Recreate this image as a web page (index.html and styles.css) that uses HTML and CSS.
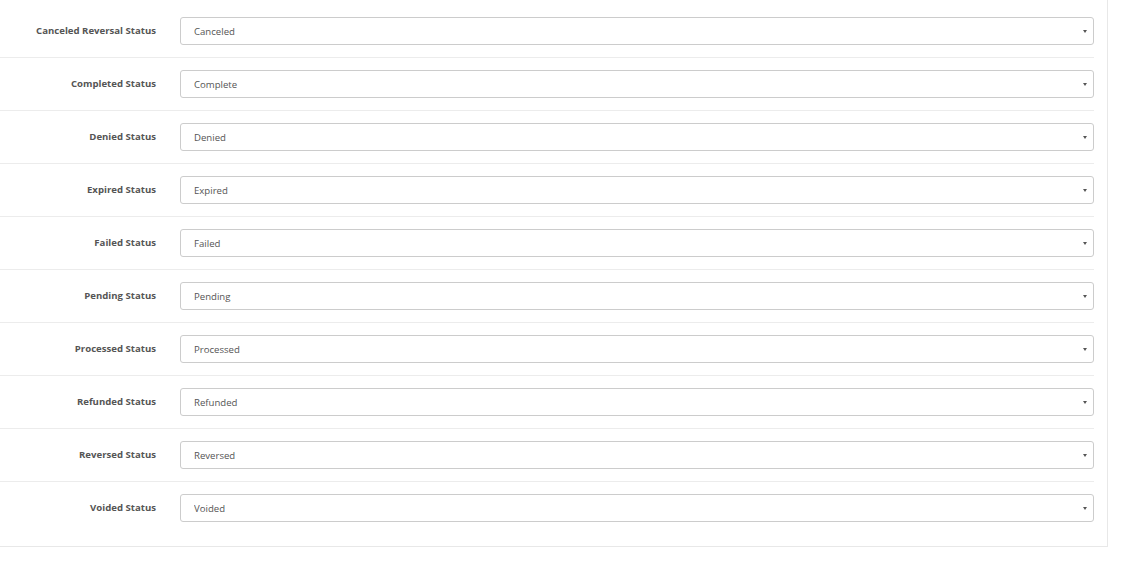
FILE: index.html
```html
<!DOCTYPE html>
<html>
<head>
<meta charset="utf-8">
<link rel="stylesheet" href="styles.css">
</head>
<body>
<div class="panel">
  <div class="row"><label class="lbl">Canceled Reversal Status</label><div class="sel"><select><option>Canceled</option></select><span class="caret"></span></div></div>
  <div class="row"><label class="lbl">Completed Status</label><div class="sel"><select><option>Complete</option></select><span class="caret"></span></div></div>
  <div class="row"><label class="lbl">Denied Status</label><div class="sel"><select><option>Denied</option></select><span class="caret"></span></div></div>
  <div class="row"><label class="lbl">Expired Status</label><div class="sel"><select><option>Expired</option></select><span class="caret"></span></div></div>
  <div class="row"><label class="lbl">Failed Status</label><div class="sel"><select><option>Failed</option></select><span class="caret"></span></div></div>
  <div class="row"><label class="lbl">Pending Status</label><div class="sel"><select><option>Pending</option></select><span class="caret"></span></div></div>
  <div class="row"><label class="lbl">Processed Status</label><div class="sel"><select><option>Processed</option></select><span class="caret"></span></div></div>
  <div class="row"><label class="lbl">Refunded Status</label><div class="sel"><select><option>Refunded</option></select><span class="caret"></span></div></div>
  <div class="row"><label class="lbl">Reversed Status</label><div class="sel"><select><option>Reversed</option></select><span class="caret"></span></div></div>
  <div class="row last"><label class="lbl">Voided Status</label><div class="sel"><select><option>Voided</option></select><span class="caret"></span></div></div>
</div>
</body>
</html>
```
FILE: styles.css
```css
html, body { margin: 0; padding: 0; background: #fff; }
body { font-family: "Open Sans", "Liberation Sans", sans-serif; }
.panel {
  width: 1094px;
  padding-right: 13px;
  border-right: 1px solid #e8e8e8;
  border-bottom: 1px solid #e8e8e8;
  padding-top: 5px;
}
.row {
  display: grid;
  grid-template-columns: 156px 1fr;
  column-gap: 24px;
  padding: 12px 0;
  border-top: 1px solid #ececec;
}
.row:first-child { border-top: none; padding-top: 12px; }
.row.last { padding-bottom: 24px; }
.lbl {
  text-align: right;
  font-size: 9.6px;
  font-weight: 700;
  color: #555;
  padding-top: 7px;
  line-height: 13px;
}
.sel { position: relative; }
.sel select {
  -webkit-appearance: none;
  appearance: none;
  width: 100%;
  height: 28px;
  box-sizing: border-box;
  border: 1px solid #ccc;
  border-radius: 3px;
  background: #fff;
  padding: 0 12px 0 13px;
  font-family: "Open Sans", "Liberation Sans", sans-serif;
  font-size: 9.6px;
  color: #555;
  margin: 0;
  display: block;
}
.caret {
  position: absolute;
  right: 7px;
  top: 13px;
  width: 0;
  height: 0;
  border-left: 2px solid transparent;
  border-right: 2px solid transparent;
  border-top: 3px solid #555;
}
```
